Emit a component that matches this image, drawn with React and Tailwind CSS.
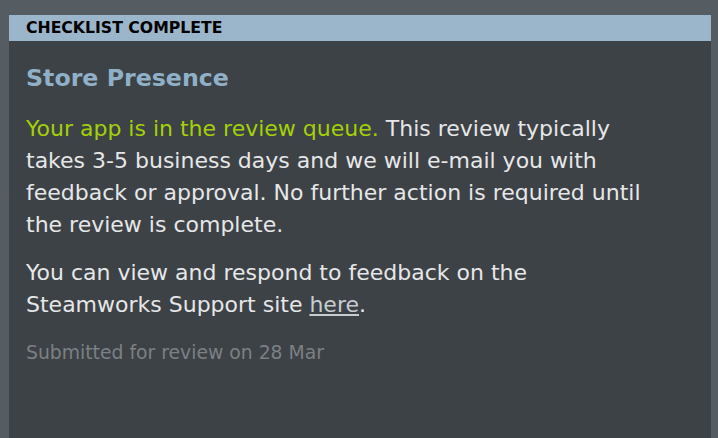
export default function App() {
  return (
    <div className="w-[718px] h-[438px] bg-[#555c62] pt-[15px] pl-[9px] pr-[7px] overflow-hidden" style={{ fontFamily: '"DejaVu Sans", "Noto Sans", sans-serif' }}>
      <div className="h-full bg-[#3d4246] flex flex-col">
        <div className="h-[26px] bg-[#9bb6ca] px-[17px] flex items-center">
          <span className="text-[15.7px] font-bold text-black">CHECKLIST COMPLETE</span>
        </div>
        <div className="px-[17px] pt-[21px]">
          <h2 className="text-[23.7px] font-bold text-[#8fb0c6] leading-[32px]">Store Presence</h2>
          <p className="mt-[19px] max-w-[620px] text-[22px] leading-[32px] text-[#e6e7e8]">
            <span className="text-[#a4d007]">Your app is in the review queue.</span> This review typically takes 3-5 business days and we will e-mail you with feedback or approval. No further action is required until the review is complete.
          </p>
          <p className="mt-[16px] max-w-[620px] text-[22px] leading-[32px] text-[#e6e7e8]">
            You can view and respond to feedback on the Steamworks Support site <a className="underline underline-offset-2 text-[#c6cdd2]">here</a>.
          </p>
          <p className="mt-[18px] text-[18.8px] leading-[28px] text-[#7b8084]">Submitted for review on 28 Mar</p>
        </div>
      </div>
    </div>
  );
}
